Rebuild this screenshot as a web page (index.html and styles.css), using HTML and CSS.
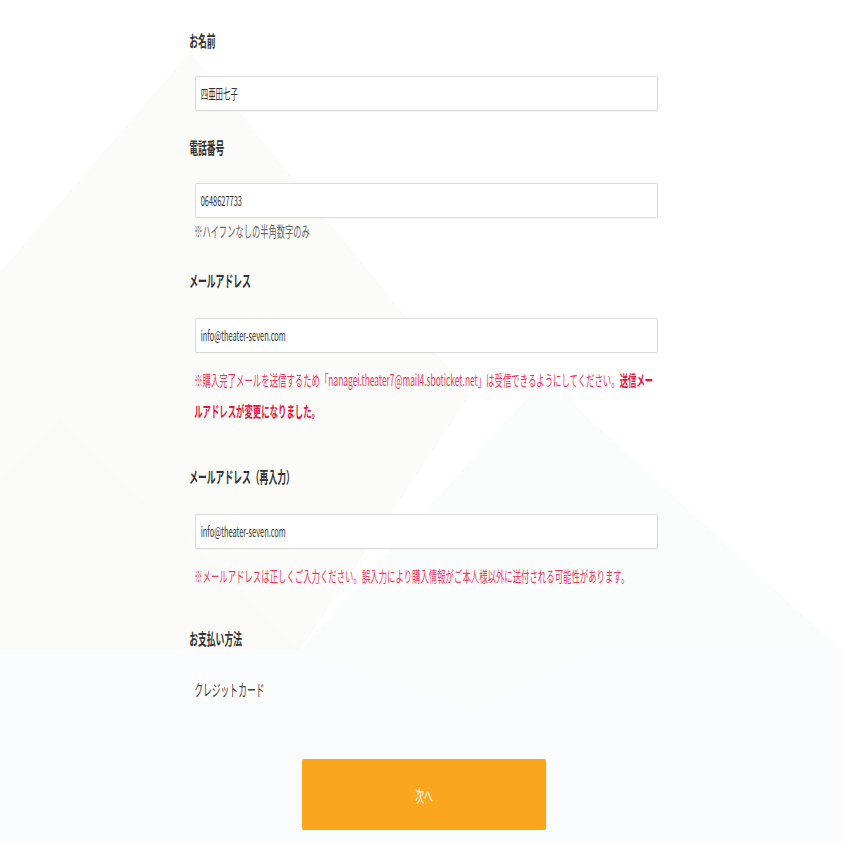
FILE: index.html
```html
<!DOCTYPE html>
<html lang="ja">
<head>
<meta charset="utf-8">
<title>お客様情報</title>
<link rel="stylesheet" href="styles.css">
</head>
<body>
<div class="viewport">
  <div class="stage">
    <form class="form">
      <div class="field">
        <div class="label">お名前</div>
        <div class="input">四亜田七子</div>
      </div>
      <div class="field">
        <div class="label">電話番号</div>
        <div class="input">0648627733</div>
        <div class="note">※ハイフンなしの半角数字のみ</div>
      </div>
      <div class="field field-mail">
        <div class="label">メールアドレス</div>
        <div class="input">info@theater-seven.com</div>
        <div class="warn warn-tall">※購入完了メールを送信するため「nanagei.theater7@mail4.sboticket.net」は受信できるようにしてください。<strong>送信メールアドレスが変更になりました。</strong></div>
      </div>
      <div class="field field-mail2">
        <div class="label">メールアドレス（再入力）</div>
        <div class="input">info@theater-seven.com</div>
        <div class="warn">※メールアドレスは正しくご入力ください。誤入力により購入情報がご本人様以外に送付される可能性があります。</div>
      </div>
      <div class="field field-pay">
        <div class="label">お支払い方法</div>
        <div class="value">クレジットカード</div>
      </div>
      <div class="actions">
        <button type="button" class="next">次へ</button>
      </div>
    </form>
  </div>
</div>
</body>
</html>
```
FILE: styles.css
```css
html, body {
  margin: 0;
  padding: 0;
  background: #ffffff;
}
.viewport {
  width: 843px;
  height: 843px;
  overflow: hidden;
  background-color: #ffffff;
  background-image: url("data:image/svg+xml;utf8,<svg xmlns='http://www.w3.org/2000/svg' width='843' height='843'><polygon points='0,272 190,52 470,395 300,650 0,650' fill='%23fbfcf9'/><polygon points='300,650 545,378 843,652 843,843 300,843' fill='%23fbfcfc'/><polygon points='0,650 300,650 470,710 600,650 843,652 843,843 0,843' fill='%23fbfcfd'/><polygon points='60,420 300,650 0,650 0,480' fill='%23fafbf8'/></svg>");
  font-family: "Noto Sans CJK JP", "Noto Sans", sans-serif;
}
.stage {
  width: 1533px;
  transform: scaleX(0.55);
  transform-origin: 0 0;
}
.form {
  margin: 0 0 0 344px;
  width: 852px;
  padding-top: 28px;
}
.field {
  display: flex;
  flex-direction: column;
  align-items: flex-start;
}
.label {
  font-size: 16px;
  font-weight: 700;
  color: #333333;
  line-height: 24px;
  height: 24px;
  margin-bottom: 24px;
}
.input {
  box-sizing: border-box;
  align-self: stretch;
  margin-left: 11px;
  height: 35px;
  border: 1px solid #cfcfcf;
  border-radius: 2px;
  background: #ffffff;
  padding: 0 9px;
  font-size: 13.5px;
  line-height: 33px;
  color: #333333;
  box-shadow: 0 1px 1px rgba(0,0,0,0.03);
}
.field + .field {
  margin-top: 24px;
}
.note {
  margin-left: 9px;
  margin-top: 1px;
  font-size: 15px;
  line-height: 24px;
  color: #666666;
}
.field-mail {
  margin-top: 25px !important;
}
.field-mail .label,
.field-mail2 .label {
  margin-bottom: 26px;
}
.warn {
  margin-left: 9px;
  margin-top: 11px;
  font-size: 15.25px;
  line-height: 31px;
  color: #f0385e;
}
.warn strong {
  font-weight: 700;
  color: #e8163f;
}
.field-mail2 {
  margin-top: 38px !important;
}
.field-pay {
  margin-top: 35px !important;
}
.field-pay .label {
  margin-bottom: 27px;
}
.value {
  margin-left: 9px;
  font-size: 16px;
  line-height: 24px;
  color: #444444;
}
.actions {
  display: flex;
  justify-content: flex-start;
  margin-top: 58px;
}
.next {
  margin-left: 205px;
  width: 444px;
  height: 71px;
  border: none;
  border-radius: 3px;
  background: #fba71d;
  color: #ffffff;
  font-family: "Noto Sans CJK JP", "Noto Sans", sans-serif;
  font-size: 16px;
  cursor: pointer;
}
```
